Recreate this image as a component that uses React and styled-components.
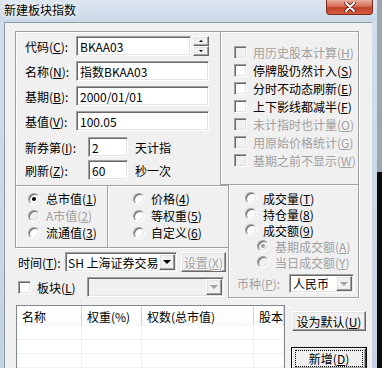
import React from 'react'
import styled, { createGlobalStyle } from 'styled-components'

const Global = createGlobalStyle`
  html, body { margin: 0; padding: 0; background: #000; }
  body {
    font-family: "Noto Sans CJK SC", "Noto Sans", sans-serif;
    font-size: 12px;
    color: #000;
  }
  u { text-decoration: underline; text-underline-offset: 1px; }
`

const Screen = styled.div`
  width: 382px;
  height: 368px;
  overflow: hidden;
  display: flex;
`

const Window = styled.div`
  width: 377px;
  display: flex;
  flex-direction: column;
  background: linear-gradient(180deg, #d3dfeb 0%, #c3d2e2 100%);
`

const TitleBar = styled.div`
  height: 22px;
  flex: none;
  display: flex;
  justify-content: space-between;
  align-items: flex-start;
  padding-left: 4px;
  background: linear-gradient(180deg, #dce6f0 0%, #cad8e7 100%);
`

const TitleText = styled.div`
  line-height: 20px;
  color: #000;
  text-shadow: 0 0 4px #fff, 0 0 8px #fff;
`

const CloseBtn = styled.div`
  width: 47px;
  height: 15px;
  margin-right: 4px;
  box-sizing: border-box;
  border: 1px solid #7a2a1c;
  border-top: none;
  border-radius: 0 0 4px 4px;
  background: linear-gradient(180deg, #eab0a0 0%, #d76e57 45%, #c0412a 55%, #d45a3e 100%);
  display: flex;
  align-items: center;
  justify-content: center;
`

const WindowBody = styled.div`
  flex: 1;
  display: flex;
  padding: 0 5px 0 4px;
`

const Client = styled.div`
  flex: 1;
  background: #f0f0f0;
  border-left: 1px solid #8e9aa8;
  border-top: 1px solid #8e9aa8;
  padding: 8px 0 0 10px;
`

const Backdrop = styled.div`
  width: 5px;
  display: flex;
  flex-direction: column;
`

const BackdropPart = styled.div`
  height: ${(p) => p.h}px;
  flex: ${(p) => (p.h ? 'none' : '1')};
  background: ${(p) => p.bg};
`

const Group = styled.div`
  box-sizing: border-box;
  width: ${(p) => p.w}px;
  height: ${(p) => p.h}px;
  border: 1px solid #a0a0a0;
  box-shadow: inset 1px 1px 0 #fff, 1px 1px 0 #fff;
  padding: ${(p) => p.pad};
  margin: ${(p) => p.m || 0};
  display: flex;
  flex-direction: column;
`

const Row = styled.div`
  display: flex;
  align-items: center;
  height: ${(p) => p.h || 20}px;
  margin-top: ${(p) => p.mt || 0}px;
  margin-left: ${(p) => p.ml || 0}px;
  padding-left: ${(p) => p.pl || 0}px;
  gap: ${(p) => p.gap || 0}px;
  flex: none;
`

const Label = styled.span`
  width: ${(p) => p.w}px;
  flex: none;
  white-space: nowrap;
  color: ${(p) => (p.disabled ? '#a0a0a0' : '#000')};
`

const Text = styled.span`
  white-space: nowrap;
  color: ${(p) => (p.disabled ? '#a0a0a0' : '#000')};
  margin-left: ${(p) => p.ml || 0}px;
`

const Field = styled.div`
  box-sizing: border-box;
  width: ${(p) => p.w}px;
  height: ${(p) => p.h || 20}px;
  flex: none;
  background: ${(p) => (p.disabled ? '#f0f0f0' : '#fff')};
  border: 1px solid;
  border-color: #a0a0a0 #fff #fff #a0a0a0;
  box-shadow: inset 1px 1px 0 #696969, inset -1px -1px 0 #e3e3e3;
  padding: 0 0 0 ${(p) => p.pl ?? 3}px;
  display: flex;
  align-items: center;
  white-space: nowrap;
  overflow: hidden;
`

const FieldText = styled.span`
  flex: 1;
  overflow: hidden;
`

const Spinner = styled.div`
  display: flex;
  flex-direction: column;
  margin-left: 2px;
  height: 20px;
  justify-content: center;
`

const RaisedBtn = styled.div`
  box-sizing: border-box;
  width: ${(p) => p.w}px;
  height: ${(p) => p.h}px;
  flex: none;
  background: #f0f0f0;
  border: 1px solid;
  border-color: #fff #696969 #696969 #fff;
  box-shadow: inset -1px -1px 0 #a0a0a0, inset 1px 1px 0 #e3e3e3;
  display: flex;
  align-items: center;
  justify-content: center;
  color: ${(p) => (p.disabled ? '#a0a0a0' : '#000')};
  white-space: nowrap;
  text-shadow: ${(p) => (p.disabled ? '1px 1px 0 #fff' : 'none')};
`

const Arrow = styled.span`
  width: 0;
  height: 0;
  border-left: ${(p) => p.s}px solid transparent;
  border-right: ${(p) => p.s}px solid transparent;
  ${(p) => (p.up ? 'border-bottom' : 'border-top')}: ${(p) => p.s}px solid ${(p) => (p.disabled ? '#a0a0a0' : '#000')};
`

const Check = styled.span`
  box-sizing: border-box;
  width: 13px;
  height: 13px;
  flex: none;
  background: ${(p) => (p.disabled ? '#f0f0f0' : '#fff')};
  border: 1px solid;
  border-color: #a0a0a0 #fff #fff #a0a0a0;
  box-shadow: inset 1px 1px 0 #696969, inset -1px -1px 0 #e3e3e3;
`

const Radio = styled.span`
  box-sizing: border-box;
  width: 12px;
  height: 12px;
  flex: none;
  border-radius: 50%;
  background: ${(p) => (p.disabled ? '#f0f0f0' : '#fff')};
  border: 1px solid;
  border-color: #a0a0a0 #fff #fff #a0a0a0;
  box-shadow: inset 1px 1px 0 #696969, inset -1px -1px 0 #e3e3e3;
  display: flex;
  align-items: center;
  justify-content: center;
  &::after {
    content: '';
    width: 4px;
    height: 4px;
    border-radius: 50%;
    background: ${(p) => (p.disabled ? '#a0a0a0' : '#000')};
    display: ${(p) => (p.on ? 'block' : 'none')};
  }
`

const TopRow = styled.div`
  display: flex;
`

const MidRow = styled.div`
  display: flex;
  align-items: flex-start;
`

const LeftCol = styled.div`
  width: 214px;
  display: flex;
  flex-direction: column;
`

const RadioRow = styled.div`
  display: flex;
`

const BottomRow = styled.div`
  display: flex;
  margin-top: 7px;
`

const ListView = styled.div`
  box-sizing: border-box;
  width: 269px;
  height: 80px;
  margin-left: 1px;
  background: #fff;
  border: 1px solid #828790;
  display: grid;
  grid-template-columns: 65px 60px 112px 1fr;
  grid-auto-rows: 14px;
  grid-template-rows: 20px;
  overflow: hidden;
`

const HeadCell = styled.div`
  padding-left: 5px;
  display: flex;
  align-items: center;
  border-right: 1px solid #d5d5d5;
  box-shadow: inset -1px 0 0 #fff;
  background: linear-gradient(180deg, #ffffff 0%, #ffffff 60%, #f7f8fa 100%);
  white-space: nowrap;
  overflow: hidden;
`

const Cell = styled.div`
  border-right: 1px solid #f0f0f0;
  border-bottom: 1px solid #f0f0f0;
`

const ButtonCol = styled.div`
  margin-left: 7px;
  padding-top: 6px;
  display: flex;
  flex-direction: column;
  gap: 17px;
`

const PushBtn = styled(RaisedBtn)`
  ${(p) =>
    p.primary &&
    `
    outline: 1px solid #000;
    border-color: #fff #404040 #404040 #fff;
  `}
`

const FocusText = styled.span`
  flex: 1;
  align-self: stretch;
  margin: 2px 3px;
  outline: 1px dotted #000;
  display: flex;
  align-items: center;
  justify-content: center;
`

const checks = [
  { t: '用历史股本计算', k: 'H', d: true },
  { t: '停牌股仍然计入', k: 'S' },
  { t: '分时不动态刷新', k: 'E' },
  { t: '上下影线都减半', k: 'F' },
  { t: '未计指时也计量', k: 'O', d: true },
  { t: '用原始价格统计', k: 'G', d: true },
  { t: '基期之前不显示', k: 'W', d: true },
]

const Key = ({ k }) => (
  <>
    (<u>{k}</u>)
  </>
)

function Combo({ w, h, text, disabled, btnDisabled, pl }) {
  return (
    <Field w={w} h={h} disabled={disabled} pl={pl}>
      <FieldText>{text}</FieldText>
      <RaisedBtn w={16} h={(h || 20) - 4} style={{ marginRight: 1 }}>
        <Arrow s={4} disabled={btnDisabled} />
      </RaisedBtn>
    </Field>
  )
}

function RadioItem({ on, disabled, children, h, indent }) {
  return (
    <Row h={h} gap={6} pl={indent}>
      <Radio on={on} disabled={disabled} />
      <Text disabled={disabled}>{children}</Text>
    </Row>
  )
}

export default function App() {
  const rows = Array.from({ length: 4 })
  return (
    <>
      <Global />
      <Screen>
        <Window>
          <TitleBar>
            <TitleText>新建板块指数</TitleText>
            <CloseBtn>
              <svg width="12" height="10" viewBox="0 0 12 10">
                <path d="M2 1 L10 9 M10 1 L2 9" stroke="#5a1a10" strokeWidth="3.6" strokeLinecap="round" />
                <path d="M2 1 L10 9 M10 1 L2 9" stroke="#fff" strokeWidth="2" strokeLinecap="round" />
              </svg>
            </CloseBtn>
          </TitleBar>
          <WindowBody>
            <Client>
              <TopRow>
                <Group w={205} h={154} pad="4px 0 0 9px" style={{ borderRight: 'none', borderBottom: 'none' }}>
                  <Row>
                    <Label w={51}>代码<Key k="C" />:</Label>
                    <Field w={115}>BKAA03</Field>
                    <Spinner>
                      <RaisedBtn w={16} h={10}><Arrow s={2} up /></RaisedBtn>
                      <RaisedBtn w={16} h={10}><Arrow s={2} /></RaisedBtn>
                    </Spinner>
                  </Row>
                  <Row mt={5}>
                    <Label w={51}>名称<Key k="N" />:</Label>
                    <Field w={133}>指数BKAA03</Field>
                  </Row>
                  <Row mt={5}>
                    <Label w={51}>基期<Key k="B" />:</Label>
                    <Field w={133}>2000/01/01</Field>
                  </Row>
                  <Row mt={5}>
                    <Label w={51}>基值<Key k="V" />:</Label>
                    <Field w={133}>100.05</Field>
                  </Row>
                  <Row mt={6}>
                    <Label w={63}>新券第<Key k="I" />:</Label>
                    <Field w={40}>2</Field>
                    <Text ml={7}>天计指</Text>
                  </Row>
                  <Row mt={3}>
                    <Label w={63}>刷新<Key k="Z" />:</Label>
                    <Field w={40}>60</Field>
                    <Text ml={7}>秒一次</Text>
                  </Row>
                </Group>
                <Group w={139} h={154} pad="11px 0 0 13px">
                  {checks.map((c) => (
                    <Row key={c.t} h={18} gap={6}>
                      <Check disabled={c.d} />
                      <Text disabled={c.d}>{c.t}<Key k={c.k} /></Text>
                    </Row>
                  ))}
                </Group>
              </TopRow>
              <MidRow>
                <LeftCol>
                  <RadioRow>
                    <Group w={93} h={63} pad="4px 0 0 12px">
                      <RadioItem h={17} on>总市值<Key k="1" /></RadioItem>
                      <RadioItem h={17} disabled>A市值<Key k="2" /></RadioItem>
                      <RadioItem h={17}>流通值<Key k="3" /></RadioItem>
                    </Group>
                    <Group w={122} h={63} pad="4px 0 0 25px" m="0 0 0 -1px">
                      <RadioItem h={17}>价格<Key k="4" /></RadioItem>
                      <RadioItem h={17}>等权重<Key k="5" /></RadioItem>
                      <RadioItem h={17}>自定义<Key k="6" /></RadioItem>
                    </Group>
                  </RadioRow>
                  <Row mt={4} pl={3}>
                    <Label w={47}>时间<Key k="T" />:</Label>
                    <Combo w={112} pl={2} text="SH 上海证券交易" />
                    <RaisedBtn w={45} h={20} disabled style={{ marginLeft: 4 }}>
                      设置<Key k="X" />
                    </RaisedBtn>
                  </Row>
                  <Row mt={5} pl={3}>
                    <Check />
                    <Label w={50} style={{ marginLeft: 6 }}>板块<Key k="L" /></Label>
                    <Combo w={137} text="" disabled btnDisabled />
                  </Row>
                </LeftCol>
                <Group w={131} h={114} pad="5px 0 0 16px" m="-1px 0 0 -1px">
                  <RadioItem h={16}>成交量<Key k="T" /></RadioItem>
                  <RadioItem h={16}>持仓量<Key k="8" /></RadioItem>
                  <RadioItem h={16}>成交额<Key k="9" /></RadioItem>
                  <RadioItem h={16} indent={12} on disabled>基期成交额<Key k="A" /></RadioItem>
                  <RadioItem h={16} indent={12} disabled>当日成交额<Key k="Y" /></RadioItem>
                  <Row mt={4} ml={-8} h={19}>
                    <Label w={52} disabled>币种<Key k="P" />:</Label>
                    <Combo w={65} h={19} text="人民币" btnDisabled />
                  </Row>
                </Group>
              </MidRow>
              <BottomRow>
                <ListView>
                  <HeadCell>名称</HeadCell>
                  <HeadCell>权重(%)</HeadCell>
                  <HeadCell>权数(总市值)</HeadCell>
                  <HeadCell>股本</HeadCell>
                  {rows.map((_, i) => (
                    <React.Fragment key={i}>
                      <Cell />
                      <Cell />
                      <Cell />
                      <Cell />
                    </React.Fragment>
                  ))}
                </ListView>
                <ButtonCol>
                  <PushBtn w={74} h={20}>设为默认<Key k="U" /></PushBtn>
                  <PushBtn w={74} h={21} primary>
                    <FocusText>新增<Key k="D" /></FocusText>
                  </PushBtn>
                </ButtonCol>
              </BottomRow>
            </Client>
          </WindowBody>
        </Window>
        <Backdrop>
          <BackdropPart h={172} bg="#9ba6b1" />
          <BackdropPart bg="#0b0b0b" />
        </Backdrop>
      </Screen>
    </>
  )
}
